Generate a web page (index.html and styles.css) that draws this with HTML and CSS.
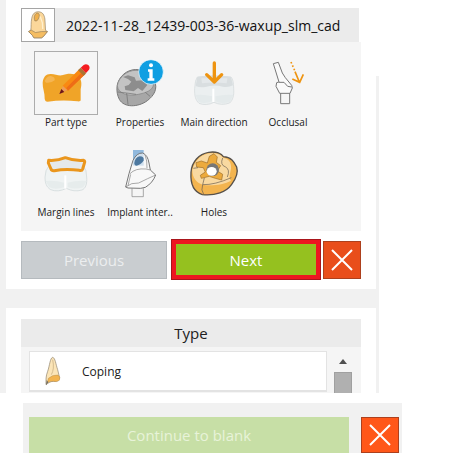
FILE: index.html
```html
<!DOCTYPE html>
<html lang="en">
<head>
  <meta charset="UTF-8">
  <title>Part setup</title>
  <meta name="viewport" content="width=device-width, initial-scale=1.0">
  <link rel="stylesheet" href="styles.css">
</head>
<body>
  <main class="wizard">
    <section class="card">
      <header class="part-header">
        <span class="part-thumb">
          <svg viewBox="0 0 102 102" aria-hidden="true">
            <path d="M28 68C30 54 28 44 31 30C34 14 42 8 54 9C66 10 71 19 73 32L75 68L81 72L68 88L62 92H38L33 84L21 72Z" fill="#fbd79a" stroke="#8d7a5c" stroke-width="2"/>
            <path d="M21 72L29 67L43 75L62 72L81 72L68 88L62 92H38L33 84Z" fill="#f5bd62" stroke="#8d7a5c" stroke-width="2"/>
            <path d="M41 38C36 26 42 12 50 13C59 15 55 31 47 38Z" fill="#f0b04c" stroke="#8d7a5c" stroke-width="2"/>
            <path d="M58 24L65 44L66 64" fill="none" stroke="#fff0cf" stroke-width="4"/>
          </svg>
        </span>
        <h1 class="part-name">2022-11-28_12439-003-36-waxup_slm_cad</h1>
      </header>

      <nav class="steps">
        <button class="step active">
          <svg viewBox="0 0 192 192" aria-hidden="true">
            <path d="M26 96C27 78 37 68 51 69C64 69 73 75 84 73C99 67 119 65 132 75C143 84 144 99 140 115L140 147C140 151 135 152 130 151C101 148 72 148 41 152C35 152 33 148 32 143C33 126 25 111 26 96Z" fill="#f0a428"/>
            <path d="M32 90Q39 74 51 75Q64 78 62 88Q52 97 36 95" fill="#f5b552"/>
            <path d="M76 129L88 103L102 116Z" fill="#ed9c59"/>
            <path d="M76 129L82 114L91 123Z" fill="#6d1717"/>
            <path d="M86 104L137 53L154 69L102 119Z" fill="#f98912"/>
            <path d="M97 111L147 61L154 69L102 119Z" fill="#ee6d16"/>
            <path d="M132 58L140 50L157 66L149 74Z" fill="#aa7435"/>
            <path d="M140 50L149 42C160 35 171 46 165 56L156 66Z" fill="#f51c20"/>
          </svg>
          <span class="step-label">Part type</span>
        </button>
        <button class="step">
          <svg viewBox="0 0 192 192" aria-hidden="true">
            <path d="M27 108C29 84 48 62 72 57C98 51 130 65 140 91C149 113 139 133 118 149C91 169 48 171 34 145C28 133 26 121 27 108Z" fill="#a7a7a7" stroke="#777" stroke-width="3"/>
            <path d="M28 104C32 78 57 58 84 58C110 58 137 79 137 98C136 119 111 126 91 130C62 137 30 129 28 104Z" fill="#c3c3c3" stroke="#808080" stroke-width="2"/>
            <path d="M45 78L60 73L80 79L84 89L104 88L118 102L103 120L90 111L77 121L52 117L50 106L62 102L70 92L60 84Z" fill="#8d8d8d"/>
            <path d="M30 123L56 126L60 160M56 126L84 130M112 124L126 136" fill="none" stroke="#6d6d6d" stroke-width="2"/>
            <circle cx="129" cy="63" r="37" fill="#109fe2" stroke="#fff" stroke-width="2"/>
            <circle cx="129" cy="43" r="6" fill="#fff"/>
            <path d="M120 55H134V82H139V89H119V82H124V62H120Z" fill="#fff"/>
          </svg>
          <span class="step-label">Properties</span>
        </button>
        <button class="step">
          <svg viewBox="0 0 192 192" aria-hidden="true">
            <path d="M46 78Q96 70 147 78Q155 86 155 112C157 134 152 148 143 156Q118 165 96 154Q72 166 51 157C40 147 37 134 38 112Q39 86 46 78Z" fill="#ebeff0" stroke="#d1d8da" stroke-width="2"/>
            <path d="M46 78Q96 70 147 78L153 103Q138 111 122 107Q96 99 70 108Q54 111 41 105Z" fill="#d9dee0"/>
            <path d="M58 82H136L134 97Q96 92 60 97Z" fill="#e4e8ea"/>
            <path d="M40 132Q66 129 90 136V151Q66 161 50 152ZM100 136Q128 129 154 132L144 152Q119 161 100 151Z" fill="#e4eaeb"/>
            <path d="M94 113V153" stroke="#fff" stroke-width="6"/>
            <path d="M97 36V93M74 71L97 93L119 71" fill="none" stroke="#ee9411" stroke-width="10" stroke-linecap="round" stroke-linejoin="round"/>
          </svg>
          <span class="step-label">Main direction</span>
        </button>
        <button class="step">
          <svg viewBox="0 0 192 192" aria-hidden="true">
            <path d="M52 38L67 34L79 66L88 80L107 103L109 111L102 127H71L60 106L62 95L69 93Z" fill="#fafafa" stroke="#777" stroke-width="3" stroke-linejoin="round"/>
            <path d="M69 94L84 94L95 106L107 108M74 127V158H101V127" fill="none" stroke="#777" stroke-width="3"/>
            <path d="M105 33L118 63" stroke="#ee9411" stroke-width="5" stroke-dasharray="5 6"/>
            <path d="M117 62L130 93M109 84L131 94L142 70" fill="none" stroke="#ee9411" stroke-width="5"/>
          </svg>
          <span class="step-label">Occlusal</span>
        </button>
        <button class="step">
          <svg viewBox="0 0 192 192" aria-hidden="true">
            <path d="M44 76H149Q158 86 158 108C160 130 154 143 144 147Q120 154 97 142Q72 155 50 146C37 138 33 126 33 108Q34 86 44 76Z" fill="#eff3f3" stroke="#ccd5d7" stroke-width="2"/>
            <path d="M35 120Q67 118 90 125V139Q64 147 46 139ZM101 125Q127 118 158 120L148 139Q121 147 101 138Z" fill="#e6ecec"/>
            <path d="M94 103V143" stroke="#fff" stroke-width="6"/>
            <path d="M44 58Q70 60 94 50Q119 60 149 58Q154 60 151 67L146 84Q144 90 136 88Q96 82 61 89Q53 90 51 84L43 66Z" fill="#e5e9ec" stroke="#ea961d" stroke-width="9" stroke-linejoin="round"/>
          </svg>
          <span class="step-label">Margin lines</span>
        </button>
        <button class="step">
          <svg viewBox="0 0 192 192" aria-hidden="true">
            <path d="M75 27H107V74H75Z" fill="#91b9dd"/>
            <path d="M53 138L63 98L75 58Q86 35 104 36Q119 42 123 66L127 87L143 102Q134 126 112 139L98 142L60 141Z" fill="#fafafa" fill-opacity=".6" stroke="#777" stroke-width="3" stroke-linejoin="round"/>
            <path d="M79 65Q82 48 95 46Q109 46 107 58Q102 70 86 74Q78 73 79 65Z" fill="#4d789f"/>
            <path d="M66 98Q82 81 114 84L127 87M53 138Q70 124 92 126Q120 112 143 102M60 134L68 100M111 42Q118 58 117 82M72 142V167H106V142" fill="none" stroke="#808080" stroke-width="2"/>
          </svg>
          <span class="step-label">Implant inter..</span>
        </button>
        <button class="step">
          <svg viewBox="0 0 192 192" aria-hidden="true">
            <path d="M27 94C29 62 51 39 80 34C103 30 119 38 124 47C148 48 156 62 164 78C169 94 161 114 149 130C133 153 100 165 61 161C35 153 25 126 27 94Z" fill="#f3b44f" stroke="#56504a" stroke-width="4"/>
            <path d="M31 87C38 58 61 38 84 37C108 34 119 44 123 50C140 52 149 65 147 83C144 101 139 110 147 119C126 131 86 136 62 131C43 126 31 110 31 87Z" fill="#f9d9a0"/>
            <path d="M42 65L58 60L76 66L82 46L96 38L106 48L103 64L116 74L106 90L122 100L119 117L100 112L82 106L58 112L55 103L70 93L64 80L44 78Z" fill="#ecaa3d" stroke="#9b6c28" stroke-width="2"/>
            <path d="M122 51Q113 72 131 78Q145 86 136 108M62 131Q56 148 65 160M62 131Q98 132 148 110M62 131L67 111M34 82L48 80" fill="none" stroke="#655b4e" stroke-width="2"/>
            <circle cx="92" cy="86" r="19" fill="#777"/>
            <ellipse cx="89" cy="91" rx="15" ry="13" fill="#fff"/>
          </svg>
          <span class="step-label">Holes</span>
        </button>
      </nav>

      <div class="actions">
        <button class="btn previous" disabled>Previous</button>
        <button class="btn next">Next</button>
        <button class="btn close" aria-label="Cancel">
          <svg viewBox="0 0 22 22" aria-hidden="true"><path d="M1 1L21 21M21 1L1 21"/></svg>
        </button>
      </div>
    </section>

    <section class="card type-card">
      <h2 class="type-title">Type</h2>
      <div class="type-body">
        <button class="type-item">
          <svg viewBox="0 0 48 90" aria-hidden="true">
            <path d="M3 86C3 71 2 61 8 46C14 29 15 6 23 4C31 6 32 24 38 41L44 66C42 75 33 77 25 76C15 76 9 82 3 86Z" fill="#fbe5b8" stroke="#8d816c" stroke-width="2"/>
            <path d="M7 80L10 67Q22 56 39 57Q48 63 43 73Q36 79 25 76Q14 76 7 80Z" fill="#f3b44f" stroke="#9b7c4b" stroke-width="1"/>
            <path d="M23 11Q29 39 19 56" fill="none" stroke="#c2a87a" stroke-width="2"/>
            <path d="M3 88L5 72L10 79Z" fill="#706b60"/>
          </svg>
          <span>Coping</span>
        </button>
        <div class="scroll">
          <button class="scroll-up" aria-label="Scroll up"></button>
          <div class="scroll-thumb"></div>
        </div>
      </div>
    </section>
  </main>

  <footer class="footer">
    <button class="btn continue" disabled>Continue to blank</button>
    <button class="btn close bright" aria-label="Close">
      <svg viewBox="0 0 22 22" aria-hidden="true"><path d="M1 1L21 21M21 1L1 21"/></svg>
    </button>
  </footer>
</body>
</html>
```
FILE: styles.css
```css
:root {
  --frame: #f1f1f1;
  --panel: #f5f5f5;
  --heading: #ebebeb;
  --text: #202020;
  --green: #95c11f;
  --red: #ed1620;
  --orange: #e94e1b;
}
* {
  box-sizing: border-box;
}
body {
  margin: 0;
  background: #fff;
  color: var(--text);
  font-family: "Open Sans", "Noto Sans", sans-serif;
}
h1, h2 {
  margin: 0;
  font-weight: 400;
}
button {
  margin: 0;
  padding: 0;
  border: none;
  background: none;
  color: inherit;
  font-family: inherit;
  cursor: pointer;
}
svg {
  display: block;
}

/* grey frame: full height on the left, starts lower on the right */
.wizard {
  margin-right: 82px;
  padding: 0 3px 0 6px;
  display: flex;
  flex-direction: column;
  background:
    linear-gradient(var(--frame), var(--frame)) left top / 6px 100% no-repeat,
    linear-gradient(var(--frame), var(--frame)) right 76px / 3px 100% no-repeat;
}
.card {
  padding: 8px 15px 10px;
}

.part-header {
  height: 34px;
  margin-right: 2px;
  display: flex;
  align-items: center;
  gap: 11px;
  background: var(--heading);
}
.part-thumb {
  width: 34px;
  height: 34px;
  flex: none;
  border: 1px solid #a5a5a5;
  background: #fff;
}
.part-name {
  font-size: 14px;
  white-space: nowrap;
  color: #111;
}

.steps {
  padding: 9px 8px 8px;
  display: grid;
  grid-template-columns: repeat(4, 74px);
  row-gap: 8px;
  background: var(--panel);
}
.step {
  display: flex;
  flex-direction: column;
  align-items: center;
}
.step svg {
  width: 64px;
  height: 64px;
}
.step.active svg {
  outline: 1px solid #acacac;
  outline-offset: -1px;
}
.step-label {
  height: 18px;
  line-height: 14px;
  font-size: 10px;
  white-space: nowrap;
}

.actions {
  display: flex;
  align-items: center;
  margin-top: 9px;
}
.btn {
  height: 38px;
  font-size: 15px;
  line-height: 20px;
  color: #fff;
}
.previous {
  width: 146px;
  margin-right: 4px;
  background: #c9cdd0;
  border: 1px solid #b5babe;
  color: #eceeef;
}
.next {
  flex: 1;
  height: 41px;
  margin: -1px 2px -1px 0;
  background: var(--green);
  border: 5px solid var(--red);
  outline: 1px solid #a9151c;
  outline-offset: -1px;
}
.close {
  width: 38px;
  flex: none;
  display: flex;
  align-items: center;
  justify-content: center;
  background: var(--orange);
  border: 1px solid #ad401d;
}
.close svg {
  width: 22px;
  height: 22px;
  fill: none;
  stroke: #fff;
  stroke-width: 2;
}

.type-card {
  height: 104px;
  padding-top: 11px;
  padding-bottom: 0;
  border-top: 19px solid var(--frame);
  overflow: hidden;
}
.type-title {
  height: 28px;
  line-height: 28px;
  font-size: 15px;
  text-align: center;
  background: var(--heading);
}
.type-body {
  height: 46px;
  padding: 4px 9px 0 8px;
  display: flex;
  gap: 7px;
  background: var(--panel);
}
.type-item {
  flex: 1;
  height: 41px;
  padding-left: 15px;
  display: flex;
  align-items: center;
  gap: 21px;
  background: #fff;
  border: 1px solid #e3e3e3;
  border-bottom-width: 2px;
  font-size: 12px;
}
.type-item svg {
  width: 16px;
  height: 30px;
}
.scroll {
  width: 18px;
}
.scroll-up {
  width: 18px;
  height: 21px;
  display: flex;
  align-items: center;
  justify-content: center;
}
.scroll-up::before {
  content: "";
  border: 4px solid transparent;
  border-top: none;
  border-bottom: 5px solid #505050;
}
.scroll-thumb {
  height: 30px;
  background: #b0b0b0;
  border: 1px solid #a0a0a0;
}

.footer {
  margin: 10px 59px 0 23px;
  padding: 14px 3px 0 6px;
  display: flex;
  gap: 12px;
  background: var(--frame);
}
.footer .btn {
  height: 36px;
}
.continue {
  flex: 1;
  background: #c7dfa6;
  color: #e8f3d9;
}
.bright {
  background: #ff5719;
}
```
